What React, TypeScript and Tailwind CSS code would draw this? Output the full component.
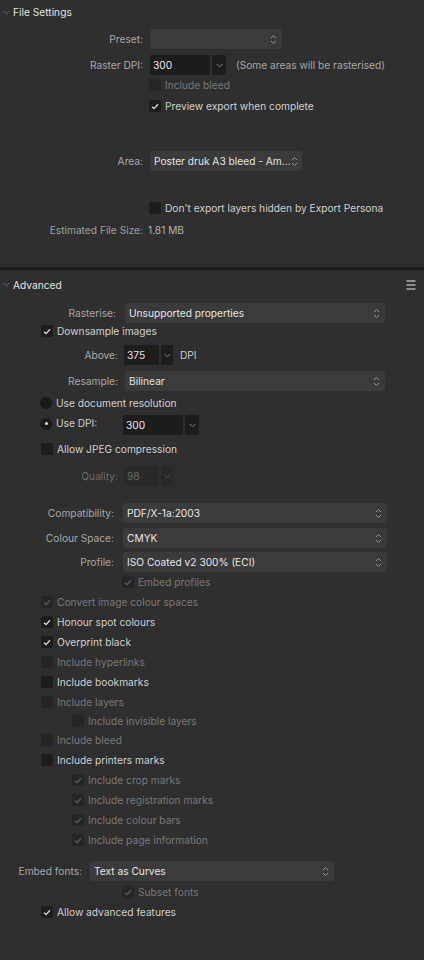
import type { ReactNode } from "react";

const FONT = "font-['Inter','Liberation_Sans',sans-serif]";

function Chevron({ className = "" }: { className?: string }) {
  return (
    <svg width="7" height="5" viewBox="0 0 7 5" className={className}>
      <path d="M0.5 0.8 L3.5 3.8 L6.5 0.8" fill="none" stroke="currentColor" strokeWidth="1" />
    </svg>
  );
}

function UpDown() {
  return (
    <svg width="7" height="11" viewBox="0 0 7 11" className="text-[#9a9a9a] shrink-0">
      <path d="M1 4 L3.5 1.5 L6 4" fill="none" stroke="currentColor" strokeWidth="1" />
      <path d="M1 7 L3.5 9.5 L6 7" fill="none" stroke="currentColor" strokeWidth="1" />
    </svg>
  );
}

function Tick({ disabled }: { disabled?: boolean }) {
  return (
    <svg width="8" height="7" viewBox="0 0 8 7" className={disabled ? "text-[#5c5c5c]" : "text-[#d8d8d8]"}>
      <path d="M1 3.8 L3 5.6 L7 1.2" fill="none" stroke="currentColor" strokeWidth="1.4" />
    </svg>
  );
}

interface CheckProps {
  label: string;
  checked?: boolean;
  disabled?: boolean;
  indent: string;
}

function Check({ label, checked, disabled, indent }: CheckProps) {
  return (
    <div className={`flex items-center h-[16px] ${indent}`}>
      <span
        className={`w-[12px] h-[12px] shrink-0 rounded-[2px] flex items-center justify-center ${
          disabled ? "bg-[#262626]" : "bg-[#1d1d1d]"
        }`}
      >
        {checked && <Tick disabled={disabled} />}
      </span>
      <span className={`ml-[4px] whitespace-nowrap ${disabled ? "text-[#7a7a7a]" : "text-[#cfcfcf]"}`}>{label}</span>
    </div>
  );
}

function Radio({ selected }: { selected?: boolean }) {
  return (
    <span className="w-[12px] h-[12px] shrink-0 rounded-full bg-[#1b1b1b] flex items-center justify-center">
      {selected && <span className="w-[3px] h-[3px] rounded-full bg-[#e0e0e0]" />}
    </span>
  );
}

function Select({ value, width }: { value?: string; width: string }) {
  return (
    <div className={`${width} h-[20px] bg-[#3b3b3b] rounded-[3px] flex items-center justify-between pl-[4px] pr-[5px]`}>
      <span className="text-[#e4e4e4] whitespace-nowrap">{value}</span>
      <UpDown />
    </div>
  );
}

interface NumProps {
  value: string;
  width: string;
  dropWidth: string;
  disabled?: boolean;
}

function NumInput({ value, width, dropWidth, disabled }: NumProps) {
  return (
    <div className="flex items-center h-[20px] gap-[2px]">
      <div
        className={`${width} h-[20px] rounded-[2px] flex items-center pl-[3px] ${
          disabled ? "bg-[#292929] text-[#6e6e6e]" : "bg-[#1d1d1d] text-[#e4e4e4]"
        }`}
      >
        {value}
      </div>
      <div
        className={`${dropWidth} h-[20px] rounded-[2px] flex items-center justify-center ${
          disabled ? "bg-[#292929] text-[#555]" : "bg-[#1d1d1d] text-[#8a8a8a]"
        }`}
      >
        <Chevron />
      </div>
    </div>
  );
}

function Field({ label, width, pad, children, dim }: { label: string; width: string; pad: string; children: ReactNode; dim?: boolean }) {
  return (
    <div className="flex items-center h-[20px]">
      <span className={`${width} ${pad} text-right shrink-0 whitespace-nowrap ${dim ? "text-[#6e6e6e]" : "text-[#a8a8a8]"}`}>{label}</span>
      {children}
    </div>
  );
}

function Header({ title, menu }: { title: string; menu?: boolean }) {
  return (
    <div className="flex items-center justify-between h-full pt-[2px]">
      <div className="flex items-center">
        <Chevron className="ml-[3px] text-[#6c6c6c]" />
        <span className="ml-[3px] text-[#e2e2e2]">{title}</span>
      </div>
      {menu && (
        <svg width="10" height="10" viewBox="0 0 10 10" className="mr-[8px] text-[#b0b0b0]">
          <path d="M0.5 1 H9.5 M0.5 5 H9.5 M0.5 9 H9.5" stroke="currentColor" strokeWidth="1.3" />
        </svg>
      )}
    </div>
  );
}

export default function App() {
  return (
    <div className={`w-[424px] h-[960px] bg-[#2f2f2f] text-[10.2px] leading-none ${FONT} overflow-hidden pt-[1px]`}>
      {/* File Settings */}
      <div className="h-[266px] flex flex-col">
        <div className="h-[21px]">
          <Header title="File Settings" />
        </div>
        <div className="mt-[7px]">
          <Field label="Preset:" width="w-[150px]" pad="pr-[7px]">
            <Select width="w-[132px]" />
          </Field>
        </div>
        <div className="mt-[6px]">
          <Field label="Raster DPI:" width="w-[150px]" pad="pr-[7px]">
            <NumInput value="300" width="w-[60px]" dropWidth="w-[14px]" />
            <span className="ml-[10px] text-[#a8a8a8] whitespace-nowrap">(Some areas will be rasterised)</span>
          </Field>
        </div>
        <div className="mt-[2px] flex flex-col gap-[5px]">
          <Check label="Include bleed" disabled indent="pl-[149px]" />
          <Check label="Preview export when complete" checked indent="pl-[149px]" />
        </div>
        <div className="mt-[37px]">
          <Field label="Area:" width="w-[150px]" pad="pr-[7px]">
            <Select value="Poster druk A3 bleed - Am…" width="w-[152px]" />
          </Field>
        </div>
        <div className="mt-[29px]">
          <Check label="Don't export layers hidden by Export Persona" indent="pl-[149px]" />
        </div>
        <div className="mt-[6px] flex items-center h-[16px]">
          <span className="w-[143px] text-right text-[#a0a0a0]">Estimated File Size:</span>
          <span className="ml-[5px] text-[#b4b4b4]">1.81 MB</span>
        </div>
      </div>

      <div className="h-[3px] bg-[#1a1a1a]" />

      {/* Advanced */}
      <div className="flex flex-col">
        <div className="h-[28px]">
          <Header title="Advanced" menu />
        </div>
        <div className="mt-[5px]">
          <Field label="Rasterise:" width="w-[125px]" pad="pr-[9px]">
            <Select value="Unsupported properties" width="w-[260px]" />
          </Field>
        </div>
        <Check label="Downsample images" checked indent="pl-[41px]" />
        <div className="mt-[6px]">
          <Field label="Above:" width="w-[124px]" pad="pr-[6px]">
            <NumInput value="375" width="w-[35px]" dropWidth="w-[12px]" />
            <span className="ml-[7px] text-[#c8c8c8]">DPI</span>
          </Field>
        </div>
        <div className="mt-[6px]">
          <Field label="Resample:" width="w-[125px]" pad="pr-[7px]">
            <Select value="Bilinear" width="w-[260px]" />
          </Field>
        </div>
        <div className="mt-[4px] flex items-center h-[16px] pl-[40px]">
          <Radio />
          <span className="ml-[4px] text-[#cfcfcf]">Use document resolution</span>
        </div>
        <div className="mt-[4px] flex items-center h-[20px] pl-[40px]">
          <div className="flex items-center w-[83px] -mt-[3px]">
            <Radio selected />
            <span className="ml-[4px] text-[#cfcfcf]">Use DPI:</span>
          </div>
          <NumInput value="300" width="w-[60px]" dropWidth="w-[14px]" />
        </div>
        <div className="mt-[6px]">
          <Check label="Allow JPEG compression" indent="pl-[41px]" />
        </div>
        <div className="mt-[9px]">
          <Field label="Quality:" width="w-[124px]" pad="pr-[6px]" dim>
            <NumInput value="98" width="w-[35px]" dropWidth="w-[12px]" disabled />
          </Field>
        </div>
        <div className="mt-[17px]">
          <Field label="Compatibility:" width="w-[123px]" pad="pr-[9px]">
            <Select value="PDF/X-1a:2003" width="w-[264px]" />
          </Field>
        </div>
        <div className="mt-[5px]">
          <Field label="Colour Space:" width="w-[123px]" pad="pr-[9px]">
            <Select value="CMYK" width="w-[264px]" />
          </Field>
        </div>
        <div className="mt-[4px]">
          <Field label="Profile:" width="w-[123px]" pad="pr-[9px]">
            <Select value="ISO Coated v2 300% (ECI)" width="w-[264px]" />
          </Field>
        </div>
        <div className="mt-[2px] flex flex-col gap-[4px]">
          <Check label="Embed profiles" checked disabled indent="pl-[122px]" />
          <Check label="Convert image colour spaces" checked disabled indent="pl-[41px]" />
          <Check label="Honour spot colours" checked indent="pl-[41px]" />
          <Check label="Overprint black" checked indent="pl-[41px]" />
          <Check label="Include hyperlinks" disabled indent="pl-[41px]" />
          <Check label="Include bookmarks" indent="pl-[41px]" />
          <Check label="Include layers" disabled indent="pl-[41px]" />
        </div>
        <div className="mt-[3px] flex flex-col gap-[3px]">
          <Check label="Include invisible layers" disabled indent="pl-[72px]" />
          <Check label="Include bleed" disabled indent="pl-[41px]" />
        </div>
        <div className="mt-[4px] flex flex-col gap-[4px]">
          <Check label="Include printers marks" indent="pl-[41px]" />
          <Check label="Include crop marks" checked disabled indent="pl-[72px]" />
          <Check label="Include registration marks" checked disabled indent="pl-[72px]" />
          <Check label="Include colour bars" checked disabled indent="pl-[72px]" />
          <Check label="Include page information" checked disabled indent="pl-[72px]" />
        </div>
        <div className="mt-[13px]">
          <Field label="Embed fonts:" width="w-[90px]" pad="pr-[8px]">
            <Select value="Text as Curves" width="w-[244px]" />
          </Field>
        </div>
        <div className="mt-[3px] flex flex-col gap-[4px]">
          <Check label="Subset fonts" checked disabled indent="pl-[122px]" />
          <Check label="Allow advanced features" checked indent="pl-[41px]" />
        </div>
      </div>
    </div>
  );
}
